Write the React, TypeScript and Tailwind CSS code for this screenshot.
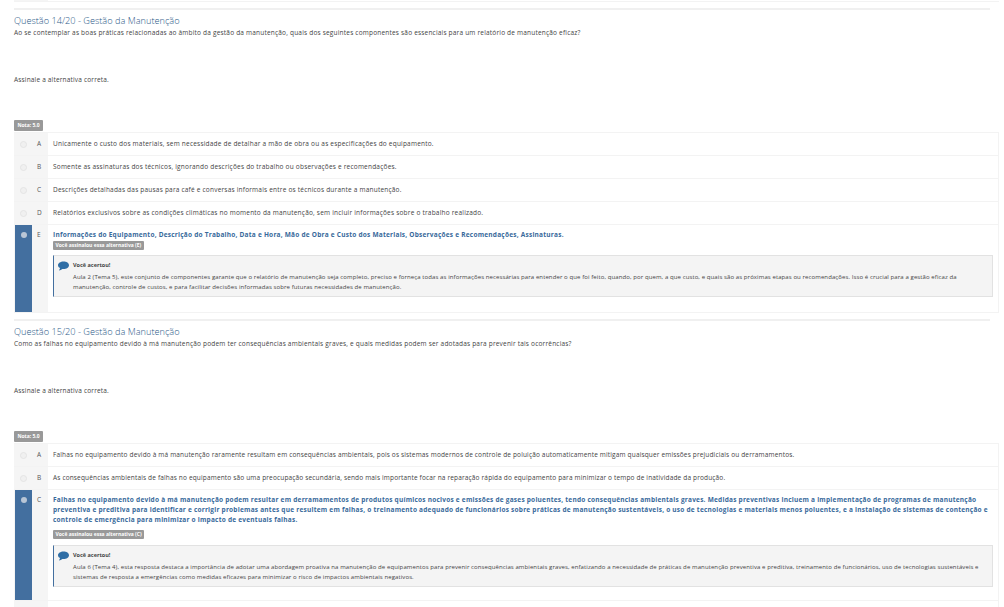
const QUESTIONS = [
  {
    title: 'Questão 14/20 - Gestão da Manutenção',
    text: 'Ao se contemplar as boas práticas relacionadas ao âmbito da gestão da manutenção, quais dos seguintes componentes são essenciais para um relatório de manutenção eficaz?',
    options: [
      { letter: 'A', text: 'Unicamente o custo dos materiais, sem necessidade de detalhar a mão de obra ou as especificações do equipamento.' },
      { letter: 'B', text: 'Somente as assinaturas dos técnicos, ignorando descrições do trabalho ou observações e recomendações.' },
      { letter: 'C', text: 'Descrições detalhadas das pausas para café e conversas informais entre os técnicos durante a manutenção.' },
      { letter: 'D', text: 'Relatórios exclusivos sobre as condições climáticas no momento da manutenção, sem incluir informações sobre o trabalho realizado.' },
    ],
    correct: {
      letter: 'E',
      text: 'Informações do Equipamento, Descrição do Trabalho, Data e Hora, Mão de Obra e Custo dos Materiais, Observações e Recomendações, Assinaturas.',
      feedback: 'Aula 2 (Tema 5), este conjunto de componentes garante que o relatório de manutenção seja completo, preciso e forneça todas as informações necessárias para entender o que foi feito, quando, por quem, a que custo, e quais são as próximas etapas ou recomendações. Isso é crucial para a gestão eficaz da manutenção, controle de custos, e para facilitar decisões informadas sobre futuras necessidades de manutenção.',
    },
  },
  {
    title: 'Questão 15/20 - Gestão da Manutenção',
    text: 'Como as falhas no equipamento devido à má manutenção podem ter consequências ambientais graves, e quais medidas podem ser adotadas para prevenir tais ocorrências?',
    options: [
      { letter: 'A', text: 'Falhas no equipamento devido à má manutenção raramente resultam em consequências ambientais, pois os sistemas modernos de controle de poluição automaticamente mitigam quaisquer emissões prejudiciais ou derramamentos.' },
      { letter: 'B', text: 'As consequências ambientais de falhas no equipamento são uma preocupação secundária, sendo mais importante focar na reparação rápida do equipamento para minimizar o tempo de inatividade da produção.' },
    ],
    correct: {
      letter: 'C',
      text: 'Falhas no equipamento devido à má manutenção podem resultar em derramamentos de produtos químicos nocivos e emissões de gases poluentes, tendo consequências ambientais graves. Medidas preventivas incluem a implementação de programas de manutenção preventiva e preditiva para identificar e corrigir problemas antes que resultem em falhas, o treinamento adequado de funcionários sobre práticas de manutenção sustentáveis, o uso de tecnologias e materiais menos poluentes, e a instalação de sistemas de contenção e controle de emergência para minimizar o impacto de eventuais falhas.',
      feedback: 'Aula 6 (Tema 4), esta resposta destaca a importância de adotar uma abordagem proativa na manutenção de equipamentos para prevenir consequências ambientais graves, enfatizando a necessidade de práticas de manutenção preventiva e preditiva, treinamento de funcionários, uso de tecnologias sustentáveis e sistemas de resposta a emergências como medidas eficazes para minimizar o risco de impactos ambientais negativos.',
    },
  },
];

function Bubble() {
  return (
    <svg viewBox="0 0 24 20" className="w-[11px] h-[10px] shrink-0" aria-hidden="true">
      <path d="M12 0C5.4 0 0 3.6 0 8.2c0 2.6 1.7 4.9 4.4 6.4-.3 1.9-1.3 3.6-2.4 5 2.9-.4 5.6-1.6 7.5-3.2.8.1 1.7.2 2.5.2 6.6 0 12-3.7 12-8.4S18.6 0 12 0z" fill="#2f6ea5" />
    </svg>
  );
}

function OptionRow({ letter, text, tight }: { letter: string; text: string; tight: boolean }) {
  return (
    <div className="flex h-[23px] border-b border-[#f3f3f3]">
      <div className="w-[34px] shrink-0 bg-[#f5f5f5] flex items-center pl-[6px]">
        <span className="w-[7px] h-[7px] rounded-full bg-[#f0f0f0] border border-[#e4e4e4]" />
        <span className="ml-[10px] text-[#555] text-[6.5px]">{letter}</span>
      </div>
      <div className={`pl-[5px] flex items-center text-[6.5px] text-[#444] ${tight ? 'tracking-[0.16px]' : 'tracking-[0.21px]'}`}>{text}</div>
    </div>
  );
}

function CorrectRow({ letter, text, feedback, tall }: { letter: string; text: string; feedback: string; tall: boolean }) {
  return (
    <div className={`flex ${tall ? 'h-[111px]' : 'h-[88px]'} border-b border-[#f3f3f3]`}>
      <div className="w-[34px] shrink-0 bg-[#f5f5f5] flex">
        <div className="ml-px w-[17px] bg-[#436f9f] flex justify-center pt-[7px]">
          <span className="w-[6px] h-[6px] rounded-full bg-[#b9c6d6]" />
        </div>
        <span className="ml-[5px] pt-[6px] text-[#555] text-[6.5px] leading-[7px]">{letter}</span>
      </div>
      <div className="pl-[5px] pt-[5px] pr-[5px] flex-1 min-w-0">
        <div className="pr-[5px] text-[6.5px] leading-[10px] font-bold text-[#37699b] tracking-[0.235px]">{text}</div>
        <div className={`${tall ? 'mt-[5px]' : 'mt-[1px]'} w-fit h-[9px] px-[2.5px] rounded-[1px] bg-[#999] text-white font-bold text-[5px] leading-[9px]`}>
          Você assinalou essa alternativa ({letter})
        </div>
        <div className={`${tall ? 'mt-[6px]' : 'mt-[5px]'} flex gap-[4px] bg-[#f4f4f4] border border-[#e2e2e2] border-l-[#436f9f] pl-[4px] pr-[10px] pt-[5px] pb-[4px]`}>
          <Bubble />
          <div className="min-w-0">
            <div className="font-bold text-[5.5px] leading-[9px] text-[#444]">Você acertou!</div>
            <div className="mt-[3px] text-[6px] leading-[9.5px] text-[#444] tracking-[0.1px]">{feedback}</div>
          </div>
        </div>
      </div>
    </div>
  );
}

export default function App() {
  return (
    <div className="h-[607px] overflow-hidden bg-white text-[#333] font-['Open_Sans',sans-serif] px-[14px]">
      <div className="h-[1px] w-[34px] bg-[#f5f5f5]" />
      <div className="h-[1px] w-[985px] bg-[#f3f3f3]" />
      <div className="h-[6px]" />
      {QUESTIONS.map((q, i) => (
        <section key={q.title} className="border-t-2 border-[#f0f0f0] h-[311px]">
          <h2 className="mt-[4px] text-[9.2px] leading-[14px] font-light text-[#2c5a88]">{q.title}</h2>
          <p className="text-[6.5px] leading-[10px] text-[#444] tracking-[0.2px]">{q.text}</p>
          <p className="mt-[37px] text-[6.5px] leading-[10px] text-[#444] tracking-[0.18px]">Assinale a alternativa correta.</p>
          <div className="mt-[35px] w-[29px] h-[11px] rounded-[1px] bg-[#999] text-white font-bold text-[5px] leading-[11px] text-center">Nota: 5.0</div>
          <div className="mt-[1px] w-[985px] border-t border-r border-[#f3f3f3]">
            {q.options.map((o) => (
              <OptionRow key={o.letter} letter={o.letter} text={o.text} tight={i === 1} />
            ))}
            <CorrectRow {...q.correct} tall={i === 1} />
            {i === 1 && <div className="h-[10px] w-[34px] bg-[#f5f5f5]" />}
          </div>
        </section>
      ))}
    </div>
  );
}
